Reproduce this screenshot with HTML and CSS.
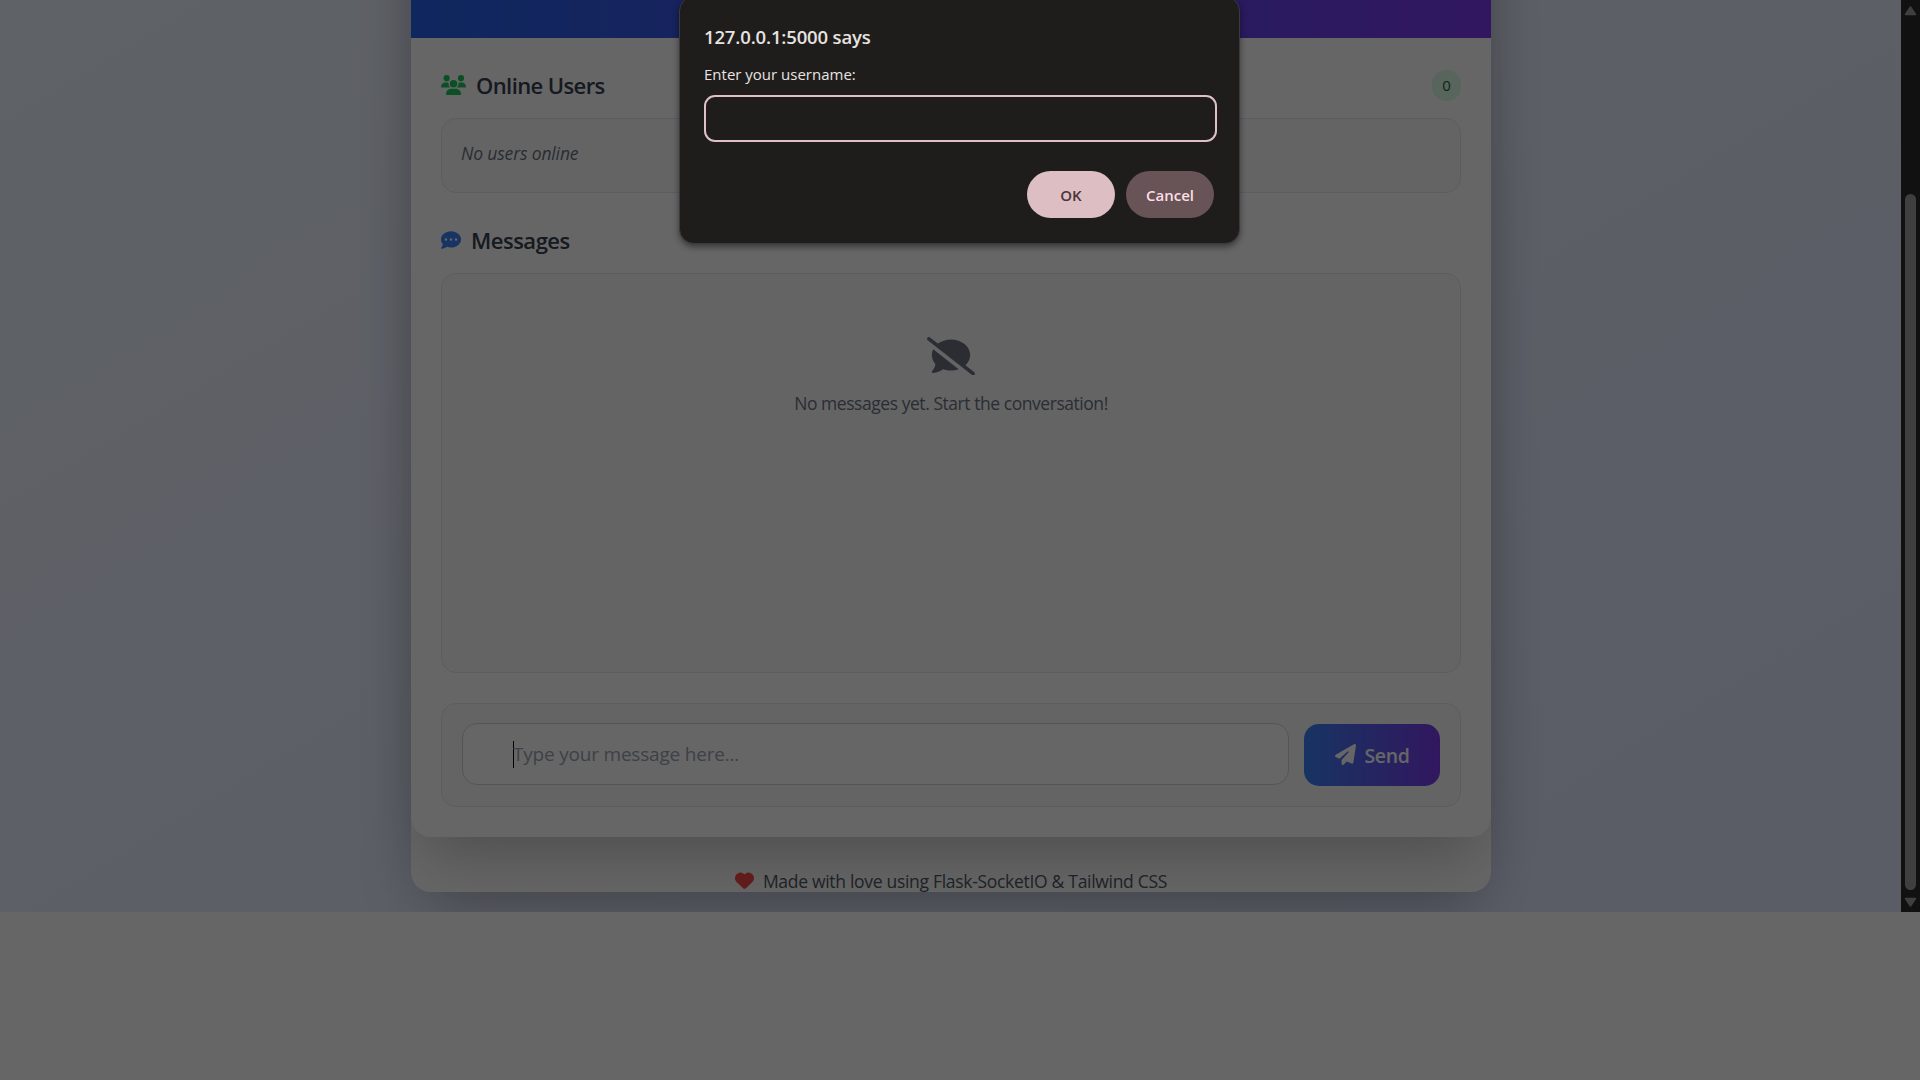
FILE: index.html
```html
<!DOCTYPE html>
<html lang="en">
<head>
<meta charset="utf-8">
<title>Chat</title>
<link rel="stylesheet" href="styles.css">
</head>
<body>
<div class="window">
  <div class="viewport">
    <div class="page">
      <div class="shell">
        <main class="chat">
          <header class="chat-header"></header>
          <div class="chat-body">
            <div class="section-head">
              <svg class="icon icon-users" viewBox="0 0 640 512"><path d="M144 0a80 80 0 1 1 0 160A80 80 0 1 1 144 0zM512 0a80 80 0 1 1 0 160A80 80 0 1 1 512 0zM0 298.7C0 239.8 47.8 192 106.7 192h42.7c15.9 0 31 3.5 44.6 9.7c-1.3 7.2-1.9 14.7-1.9 22.3c0 38.2 16.8 72.5 43.3 96c-.2 0-.4 0-.7 0H21.3C9.6 320 0 310.4 0 298.7zM405.3 320c-.2 0-.4 0-.7 0c26.6-23.5 43.3-57.8 43.3-96c0-7.6-.7-15-1.9-22.3c13.6-6.3 28.7-9.7 44.6-9.7h42.7C592.2 192 640 239.8 640 298.7c0 11.8-9.6 21.3-21.3 21.3H405.3zM224 224a96 96 0 1 1 192 0 96 96 0 1 1 -192 0zM128 485.3C128 411.7 187.7 352 261.3 352H378.7C452.3 352 512 411.7 512 485.3c0 14.7-11.9 26.7-26.7 26.7H154.7c-14.7 0-26.7-11.9-26.7-26.7z"/></svg>
              <h2 class="title title-users">Online Users</h2>
              <span class="count">0</span>
            </div>
            <div class="panel users"><span class="no-users">No users online</span></div>
            <div class="section-head">
              <svg class="icon icon-comment" viewBox="0 0 512 512"><path d="M256 448c141.4 0 256-93.1 256-208S397.4 32 256 32S0 125.1 0 240c0 45.1 17.7 86.8 47.7 120.9c-1.9 24.5-11.4 46.3-21.4 62.9c-5.5 9.2-11.1 16.6-15.2 21.6c-2.1 2.5-3.7 4.4-4.9 5.7c-.6 .6-1 1.1-1.3 1.4l-.3 .3c-4.6 4.6-5.9 11.4-3.4 17.4c2.5 6 8.3 9.9 14.8 9.9c28.7 0 57.6-8.9 81.6-19.3c22.9-10 42.4-21.9 54.3-30.6c31.8 11.5 67 17.9 104.1 17.9zM128 208a32 32 0 1 1 0 64 32 32 0 1 1 0-64zm128 0a32 32 0 1 1 0 64 32 32 0 1 1 0-64zm96 32a32 32 0 1 1 64 0 32 32 0 1 1 -64 0z"/></svg>
              <h2 class="title title-messages">Messages</h2>
            </div>
            <div class="panel messages">
              <svg class="icon icon-slash" viewBox="0 0 640 512"><path d="M38.8 5.1C28.4-3.1 13.3-1.2 5.1 9.2S-1.2 34.7 9.2 42.9l592 464c10.4 8.2 25.5 6.3 33.7-4.1s6.3-25.5-4.1-33.7L512.9 376.7C552.2 340.2 576 292.3 576 240C576 125.1 461.4 32 320 32c-67.7 0-129.3 21.4-175.1 56.3L38.8 5.1zM421.9 430.6L82.9 163.5C70.7 187.2 64 212.9 64 240c0 45.1 17.7 86.8 47.7 120.9c-1.9 24.5-11.4 46.3-21.4 62.9c-5.5 9.2-11.1 16.6-15.2 21.6c-2.1 2.5-3.7 4.4-4.9 5.7c-.6 .6-1 1.1-1.3 1.4l-.3 .3c-4.6 4.6-5.9 11.4-3.4 17.4c2.5 6 8.3 9.9 14.8 9.9c28.7 0 57.6-8.9 81.6-19.3c22.9-10 42.4-21.9 54.3-30.6c31.8 11.5 67 17.9 104.1 17.9c36.5 0 71-6.2 101.9-17.4z"/></svg>
              <p class="no-messages">No messages yet. Start the conversation!</p>
            </div>
            <div class="panel composer">
              <div class="field"><span class="caret"></span><span class="placeholder">Type your message here...</span></div>
              <div class="send">
                <svg class="icon icon-plane" viewBox="0 0 512 512"><path d="M498.1 5.6c10.1 7 15.4 19.1 13.5 31.2l-64 416c-1.5 9.7-7.4 18.2-16 23s-18.9 5.4-28 1.6L284 427.7l-68.5 74.1c-8.9 9.7-22.9 12.9-35.2 8.1S160 493.2 160 480V396.4c0-4 1.5-7.8 4.2-10.7L331.8 202.8c5.8-6.3 5.6-16-.4-22s-15.7-6.4-22-.7L106 360.8 17.7 316.6C7.1 311.3 .3 300.7 0 288.9s5.9-22.8 16.1-28.7l448-256c10.7-6.1 23.9-5.5 34 1.4z"/></svg>
                <span class="send-label">Send</span>
              </div>
            </div>
          </div>
        </main>
        <footer class="footer">
          <svg class="icon icon-heart" viewBox="0 0 512 512"><path d="M47.6 300.4L228.3 469.1c7.5 7 17.4 10.9 27.7 10.9s20.2-3.9 27.7-10.9L464.4 300.4c30.4-28.3 47.6-68 47.6-109.5v-5.8c0-69.9-50.5-129.5-119.4-141C347 36.5 300.6 51.4 268 84L256 96 244 84c-32.6-32.6-79-47.5-124.6-39.9C50.5 55.6 0 115.2 0 185.1v5.8c0 41.5 17.2 81.2 47.6 109.5z"/></svg>
          <span class="made">Made with love using Flask-SocketIO &amp; Tailwind CSS</span>
        </footer>
      </div>
    </div>
    <div class="scrollbar">
      <svg class="arrow" viewBox="0 0 13 11"><path d="M6.5 2 11.5 9.5H1.5z"/></svg>
      <div class="thumb"></div>
      <svg class="arrow" viewBox="0 0 13 11"><path d="M6.5 9 1.5 1.5h10z"/></svg>
    </div>
  </div>
  <div class="overlay"></div>
  <div class="dialog">
    <div class="origin"><span class="origin-text">127.0.0.1:5000 says</span></div>
    <div class="prompt"><span class="prompt-text">Enter your username:</span></div>
    <div class="answer"></div>
    <div class="actions">
      <div class="btn ok">OK</div>
      <div class="btn cancel">Cancel</div>
    </div>
  </div>
</div>
</body>
</html>
```
FILE: styles.css
```css
* { box-sizing: border-box; }
body {
  margin: 0;
  font-family: "Open Sans", "Noto Sans", sans-serif;
  background: #fff;
}
h2, p { margin: 0; }
span { white-space: nowrap; }
.icon { display: block; flex: none; fill: currentColor; }

.window {
  position: relative;
  width: 1920px;
  height: 1080px;
  overflow: hidden;
  background: #fff;
}
.viewport {
  display: flex;
  height: 912px;
  overflow: hidden;
}
.page {
  flex: 1;
  display: flex;
  flex-direction: column;
  justify-content: flex-end;
  align-items: center;
  height: 912px;
  padding: 0 0 20px 1px;
  overflow: hidden;
  background: linear-gradient(to bottom right, #eff6ff, #e0e7ff) left bottom / 100% 1148px no-repeat;
}
.shell {
  flex: none;
  width: 1080px;
  height: 1108px;
  border-radius: 20px;
  background: #fff;
  box-shadow: 0 31px 62px -15px rgba(0, 0, 0, .25);
}
.chat {
  height: 1053px;
  border-radius: 20px;
  background: #fff;
  box-shadow: 0 31px 62px -15px rgba(0, 0, 0, .25);
}
.chat-header {
  height: 254px;
  border-radius: 20px 20px 0 0;
  background: linear-gradient(to right, #2563eb, #7c3aed);
}
.chat-body { padding: 0 30px; }
.section-head { display: flex; align-items: center; height: 80px; padding-top: 14px; }
.title {
  font-size: 22px;
  font-weight: 600;
  line-height: 30px;
  color: #374151;
  white-space: nowrap;
}
.title-users { margin-left: 10px; letter-spacing: -.6px; }
.title-messages { margin-left: 10px; letter-spacing: -.5px; }
.icon-users { width: 25px; height: 20px; color: #22c55e; }
.icon-comment { width: 20px; height: 20px; color: #3b82f6; }
.count {
  display: flex;
  align-items: center;
  justify-content: center;
  width: 29px;
  height: 31px;
  margin-left: auto;
  border-radius: 16px;
  background: #dcfce7;
  color: #166534;
  font-size: 15px;
}
.panel {
  border: 1px solid #e5e7eb;
  border-radius: 15px;
  background: #f9fafb;
}
.users { height: 75px; padding: 20px 19px; }
.no-users {
  display: block;
  font-size: 17.5px;
  line-height: 28px;
  font-style: italic;
  letter-spacing: -.15px;
  color: #6b7280;
}
.messages {
  display: flex;
  flex-direction: column;
  align-items: center;
  height: 400px;
  padding-top: 63px;
}
.icon-slash { width: 48px; height: 38.4px; color: #6b7280; }
.no-messages {
  margin-top: 14px;
  font-size: 17.5px;
  line-height: 28px;
  letter-spacing: -.45px;
  color: #6b7280;
}
.composer {
  display: flex;
  align-items: flex-start;
  gap: 15px;
  height: 104px;
  margin-top: 30px;
  padding: 19px 20px 0;
}
.field {
  flex: 1;
  display: flex;
  align-items: center;
  height: 62px;
  padding-left: 50px;
  border: 1px solid #d1d5db;
  border-radius: 15px;
  background: #fff;
}
.caret { width: 1px; height: 27px; margin-right: -1px; background: #000; }
.placeholder { font-size: 19px; letter-spacing: -.2px; color: #9ca3af; }
.send {
  display: flex;
  align-items: center;
  justify-content: center;
  gap: 9px;
  width: 136px;
  height: 62px;
  margin-top: 1px;
  border-radius: 15px;
  background: linear-gradient(to right, #3b82f6, #7c3aed);
  color: #fff;
}
.icon-plane { width: 21px; height: 21px; margin-top: -2px; }
.send-label { font-size: 19.5px; font-weight: 600; letter-spacing: -.4px; }
.footer {
  display: flex;
  align-items: center;
  justify-content: center;
  gap: 9px;
  height: 55px;
  padding-top: 32px;
  color: #4b5563;
}
.icon-heart { width: 19px; height: 19px; color: #ef4444; }
.made { font-size: 17.5px; letter-spacing: -.3px; line-height: 26px; }

.scrollbar {
  display: flex;
  flex-direction: column;
  align-items: center;
  width: 19px;
  padding: 5px 0 5px 0;
  background: #2c2c2c;
}
.arrow {
  flex: none;
  width: 13px;
  height: 11px;
  fill: #9f9f9f;
  stroke: #9f9f9f;
  stroke-width: 1.5;
  stroke-linejoin: round;
}
.thumb { flex: none; width: 11px; height: 696px; margin: 178px 0 7px; border-radius: 6px; background: #9f9f9f; }

.overlay { position: absolute; inset: 0; background: rgba(0, 0, 0, .6); }

.dialog {
  position: absolute;
  left: 679px;
  top: -4px;
  width: 561px;
  height: 248px;
  padding: 25px 22px 0 24px;
  border: 1px solid #3c3a3c;
  border-radius: 15px;
  background: #1e1d1b;
  box-shadow: 0 3px 6px rgba(0, 0, 0, .45);
}
.origin { height: 30px; line-height: 30px; font-size: 18.5px; font-weight: 600; color: #e8e3e1; }
.origin-text { letter-spacing: -.15px; }
.prompt { height: 43px; padding-top: 9px; line-height: 26px; font-size: 15px; color: #e8e3e1; }
.answer { width: 513px; height: 47px; border: 2px solid #dfc0c5; border-radius: 11px; }
.actions { display: flex; justify-content: flex-end; gap: 11px; margin-top: 29px; padding-right: 3px; }
.btn {
  width: 88px;
  height: 47px;
  border-radius: 24px;
  line-height: 49px;
  text-align: center;
  font-size: 15px;
  font-weight: 600;
}
.ok { background: #dcbec3; color: #49343a; }
.cancel { background: #685357; color: #fbdfe5; }
```
